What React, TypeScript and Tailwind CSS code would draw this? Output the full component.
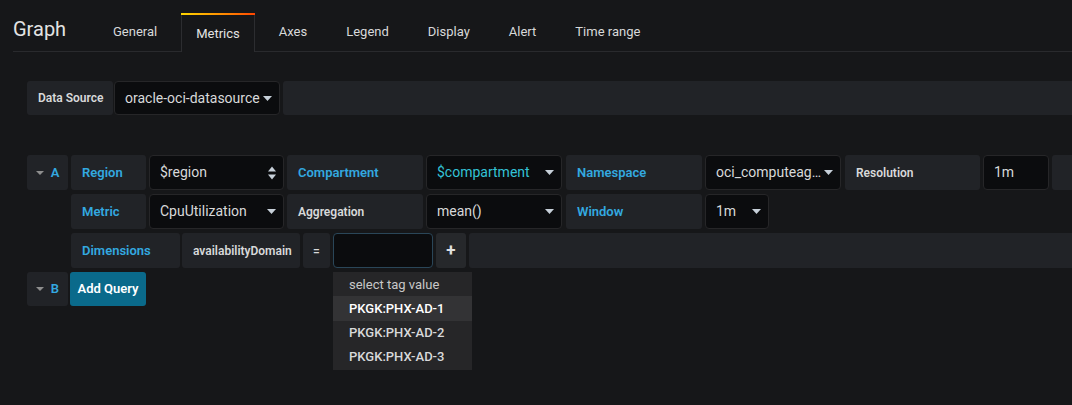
import React from "react";

const Caret = () => (
  <svg width="9" height="5" viewBox="0 0 9 5" className="shrink-0">
    <path d="M0 0 L9 0 L4.5 5 Z" fill="#c7d0d9" />
  </svg>
);

const UpDown = () => (
  <svg width="8" height="14" viewBox="0 0 8 14" className="shrink-0">
    <path d="M0 5.5 L8 5.5 L4 0.5 Z" fill="#c7d0d9" />
    <path d="M0 8.5 L8 8.5 L4 13.5 Z" fill="#c7d0d9" />
  </svg>
);

function Label({ w, children, blue = true }: { w: string; children: React.ReactNode; blue?: boolean }) {
  return (
    <div
      className={`${w} h-full shrink-0 flex items-center pl-[11px] bg-[#212327] rounded-[3px] text-[13px] font-semibold ${
        blue ? "text-[#33a9e0]" : "text-[#d8d9da]"
      }`}
    >
      {children}
    </div>
  );
}

function Select({
  w,
  children,
  updown = false,
  cyan = false,
  noCaret = false,
}: {
  w: string;
  children: React.ReactNode;
  updown?: boolean;
  cyan?: boolean;
  noCaret?: boolean;
}) {
  return (
    <div
      className={`${w} h-full shrink-0 flex items-center justify-between pl-[10px] pr-[7px] bg-[#0b0c0e] border border-[#262628] rounded-[4px] text-[14px] ${
        cyan ? "text-[#33c2d6]" : "text-[#d8d9da]"
      }`}
    >
      <span className="whitespace-nowrap">{children}</span>
      {noCaret ? null : updown ? <UpDown /> : <Caret />}
    </div>
  );
}

function Toggle({ letter }: { letter: string }) {
  return (
    <div className="w-[41px] h-full shrink-0 flex items-center justify-center gap-[7px] bg-[#212327] rounded-[3px]">
      <svg width="8" height="4" viewBox="0 0 8 4">
        <path d="M0 0 L8 0 L4 4 Z" fill="#8e8e8e" />
      </svg>
      <span className="text-[13px] font-semibold text-[#33a9e0]">{letter}</span>
    </div>
  );
}

const tabs = ["General", "Metrics", "Axes", "Legend", "Display", "Alert", "Time range"];

export default function App() {
  return (
    <div className="w-[1072px] h-[405px] bg-[#161719] overflow-hidden font-['Roboto',sans-serif] text-[#d8d9da] relative">
      {/* Header */}
      <div className="flex items-end h-[52px] ml-[13px] border-b border-[#292a2d]">
        <div className="text-[20px] leading-none text-[#e3e3e3] pb-[12px] w-[85px] shrink-0">Graph</div>
        <div className="flex items-end">
          {tabs.map((t) =>
            t === "Metrics" ? (
              <div key={t} className="mr-[9px] -mb-px flex flex-col h-[39px] bg-[#161719] border-x border-[#2c2d30]">
                <div className="h-[2px] bg-gradient-to-r from-[#ffd500] to-[#ff4400] -mx-px" />
                <div className="flex-1 flex items-center px-[14px] text-[13px] text-[#e3e3e3]">{t}</div>
              </div>
            ) : (
              <div key={t} className="mr-[9px] h-[38px] flex items-center px-[15px] text-[13px] text-[#d8d9da]">
                {t}
              </div>
            )
          )}
        </div>
      </div>

      <div className="pl-[27px]">
        {/* Data source row */}
        <div className="mt-[29px] flex h-[34px]">
          <Label w="w-[86px]" blue={false}>
            <span className="text-[12px]">Data Source</span>
          </Label>
          <div className="w-[1px]" />
          <Select w="w-[166px]">oracle-oci-datasource</Select>
          <div className="w-[3px]" />
          <div className="flex-1 h-full bg-[#212327] rounded-l-[3px]" />
        </div>

        {/* Query rows */}
        <div className="mt-[40px] flex flex-col gap-[4px]">
          <div className="flex h-[35px] gap-[3px]">
            <Toggle letter="A" />
            <Label w="w-[75px]">Region</Label>
            <Select w="w-[135px]" updown>
              $region
            </Select>
            <Label w="w-[136px]">Compartment</Label>
            <Select w="w-[136px]" cyan>
              $compartment
            </Select>
            <div className="ml-px h-full flex">
              <Label w="w-[136px]">Namespace</Label>
            </div>
            <Select w="w-[136px]">oci_computeag…</Select>
            <div className="ml-px h-full flex">
              <Label w="w-[135px]" blue={false}>
                <span className="text-[12px]">Resolution</span>
              </Label>
            </div>
            <Select w="w-[66px]" noCaret>
              1m
            </Select>
            <div className="flex-1 h-full bg-[#212327] rounded-l-[3px]" />
          </div>

          <div className="flex h-[35px] gap-[3px] pl-[44px]">
            <Label w="w-[75px]">Metric</Label>
            <Select w="w-[135px]">CpuUtilization</Select>
            <Label w="w-[136px]" blue={false}>
              <span className="text-[12px]">Aggregation</span>
            </Label>
            <Select w="w-[136px]">mean()</Select>
            <div className="ml-px h-full flex">
              <Label w="w-[136px]">Window</Label>
            </div>
            <Select w="w-[64px]">1m</Select>
          </div>

          <div className="flex h-[35px] pl-[44px]">
            <Label w="w-[109px]">Dimensions</Label>
            <div className="w-[2px]" />
            <div className="w-[118px] h-full shrink-0 flex items-center pl-[11px] bg-[#212327] rounded-[3px] text-[12px] font-semibold text-[#d8d9da]">
              availabilityDomain
            </div>
            <div className="w-[3px]" />
            <div className="w-[27px] h-full shrink-0 flex items-center justify-center bg-[#212327] rounded-[3px] text-[12px] font-semibold">
              =
            </div>
            <div className="w-[3px]" />
            <div className="w-[100px] h-full shrink-0 bg-[#0b0c0e] border border-[#2a4658] rounded-[4px]" />
            <div className="w-[3px]" />
            <div className="w-[30px] h-full shrink-0 flex items-center justify-center bg-[#26282b] rounded-[3px] text-[17px] font-bold text-[#e0e0e0]">
              +
            </div>
            <div className="w-[3px]" />
            <div className="flex-1 h-full bg-[#212327] rounded-l-[3px]" />
          </div>

          <div className="flex h-[34px] gap-[2px]">
            <Toggle letter="B" />
            <div className="w-[76px] h-full flex items-center justify-center bg-[#0a6a8b] rounded-[3px] text-[13px] font-semibold text-white">
              Add Query
            </div>
          </div>
        </div>
      </div>

      {/* Typeahead dropdown */}
      <div className="absolute left-[333px] top-[272px] w-[139px] h-[98px] bg-[#262628] pt-[1px] text-[13px]">
        <div className="h-[23px] flex items-center pl-[16px] text-[#c8c8c8]">select tag value</div>
        <div className="h-[25px] flex items-center pl-[16px] bg-[#333335] text-white font-medium">PKGK:PHX-AD-1</div>
        <div className="h-[24px] flex items-center pl-[16px] text-[#d8d9da] font-medium">PKGK:PHX-AD-2</div>
        <div className="h-[24px] flex items-center pl-[16px] text-[#d8d9da] font-medium">PKGK:PHX-AD-3</div>
      </div>
    </div>
  );
}
